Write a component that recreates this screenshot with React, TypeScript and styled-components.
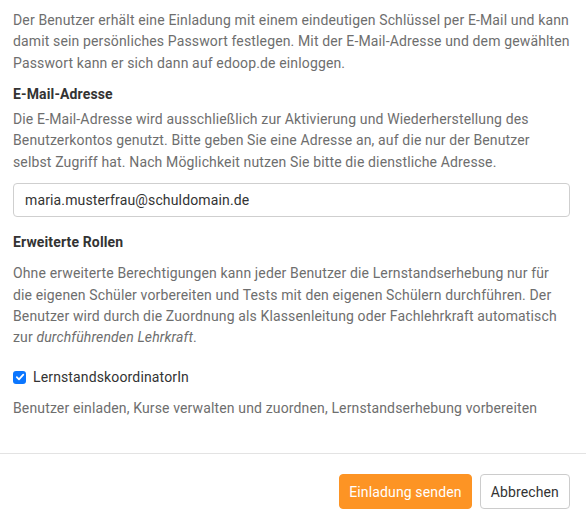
import React from "react";
import styled, { createGlobalStyle } from "styled-components";

const Global = createGlobalStyle`
  html, body { margin: 0; padding: 0; background: #fff; }
  body { font-family: Roboto, "Liberation Sans", Arial, sans-serif; -webkit-font-smoothing: antialiased; letter-spacing: 0.14px; }
  * { box-sizing: border-box; }
`;

const Dialog = styled.div`
  width: 586px;
  height: 524px;
  display: flex;
  flex-direction: column;
  background: #fff;
`;

const Body = styled.div`
  padding: 10px 16px 0 13px;
  display: flex;
  flex-direction: column;
`;

const Text = styled.p<{ $mt?: number }>`
  margin: ${(p) => p.$mt ?? 0}px 0 0;
  font-size: 14px;
  line-height: 21.3px;
  color: #6e6e6e;
`;

const Heading = styled.h4<{ $mt: number }>`
  margin: ${(p) => p.$mt}px 0 0;
  font-size: 14px;
  line-height: 21.3px;
  font-weight: 700;
  color: #333;
`;

const Input = styled.input`
  margin-top: 10px;
  width: 100%;
  height: 34px;
  border: 1px solid #cfcfcf;
  border-radius: 4px;
  padding: 0 11px;
  font-family: inherit;
  letter-spacing: inherit;
  font-size: 14px;
  color: #333;
  outline: none;
`;

const CheckRow = styled.label`
  margin-top: 18px;
  display: flex;
  align-items: center;
  gap: 7px;
  font-size: 14px;
  line-height: 21.3px;
  color: #333;
`;

const Box = styled.span`
  width: 13px;
  height: 13px;
  border-radius: 3px;
  background: #0b76ff;
  display: inline-flex;
  align-items: center;
  justify-content: center;
  flex-shrink: 0;
`;

const Divider = styled.hr`
  margin: 34px 0 0;
  border: 0;
  border-top: 1px solid #e3e3e3;
`;

const Footer = styled.div`
  display: flex;
  justify-content: flex-end;
  gap: 8px;
  padding: 20px 16px 0 13px;
`;

const Button = styled.button<{ $primary?: boolean }>`
  height: 35px;
  padding: 0 ${(p) => (p.$primary ? 9 : 10)}px;
  border-radius: 4px;
  font-family: inherit;
  letter-spacing: inherit;
  font-size: 14px;
  cursor: pointer;
  border: 1px solid ${(p) => (p.$primary ? "#fd9424" : "#cccccc")};
  background: ${(p) => (p.$primary ? "#fd9424" : "#fff")};
  color: ${(p) => (p.$primary ? "#fff" : "#333")};
`;

export default function App() {
  return (
    <Dialog>
      <Global />
      <Body>
        <Text>
          Der Benutzer erhält eine Einladung mit einem eindeutigen Schlüssel per E-Mail und kann
          damit sein persönliches Passwort festlegen. Mit der E-Mail-Adresse und dem gewählten
          Passwort kann er sich dann auf edoop.de einloggen.
        </Text>
        <Heading $mt={10}>E-Mail-Adresse</Heading>
        <Text $mt={4}>
          Die E-Mail-Adresse wird ausschließlich zur Aktivierung und Wiederherstellung des
          Benutzerkontos genutzt. Bitte geben Sie eine Adresse an, auf die nur der Benutzer
          selbst Zugriff hat. Nach Möglichkeit nutzen Sie bitte die dienstliche Adresse.
        </Text>
        <Input defaultValue="maria.musterfrau@schuldomain.de" />
        <Heading $mt={15}>Erweiterte Rollen</Heading>
        <Text $mt={10}>
          Ohne erweiterte Berechtigungen kann jeder Benutzer die Lernstandserhebung nur für
          die eigenen Schüler vorbereiten und Tests mit den eigenen Schülern durchführen. Der
          Benutzer wird durch die Zuordnung als Klassenleitung oder Fachlehrkraft automatisch
          zur <em>durchführenden Lehrkraft</em>.
        </Text>
        <CheckRow>
          <Box>
            <svg width="10" height="10" viewBox="0 0 10 10">
              <path d="M1.8 5.2 L4 7.4 L8.3 2.6" fill="none" stroke="#fff" strokeWidth="1.8" strokeLinecap="round" strokeLinejoin="round" />
            </svg>
          </Box>
          LernstandskoordinatorIn
        </CheckRow>
        <Text $mt={10}>
          Benutzer einladen, Kurse verwalten und zuordnen, Lernstandserhebung vorbereiten
        </Text>
      </Body>
      <Divider />
      <Footer>
        <Button $primary>Einladung senden</Button>
        <Button>Abbrechen</Button>
      </Footer>
    </Dialog>
  );
}
